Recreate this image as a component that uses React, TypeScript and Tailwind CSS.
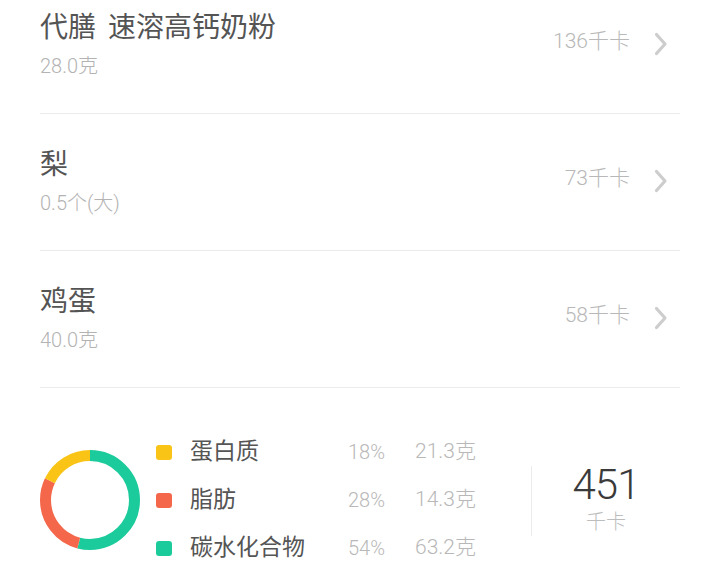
import React from "react";

const FONT = { fontFamily: '"Roboto", "Noto Sans CJK SC", sans-serif' };

const items = [
  { name: "代膳 速溶高钙奶粉", amount: "28.0克", kcal: "136" },
  { name: "梨", amount: "0.5个(大)", kcal: "73" },
  { name: "鸡蛋", amount: "40.0克", kcal: "58" },
];

const macros = [
  { name: "蛋白质", pct: "18%", g: "21.3克", color: "bg-[#f9c416]" },
  { name: "脂肪", pct: "28%", g: "14.3克", color: "bg-[#f4674b]" },
  { name: "碳水化合物", pct: "54%", g: "63.2克", color: "bg-[#1ccb9b]" },
];

function Chevron() {
  return (
    <svg width="14" height="24" viewBox="0 0 14 24" className="mt-[55px]">
      <polyline points="2.5,2.5 11,12 2.5,21.5" fill="none" stroke="#cdcdcd" strokeWidth="3.2" strokeLinecap="round" strokeLinejoin="round" />
    </svg>
  );
}

function Donut() {
  const r = 44.5;
  const C = 2 * Math.PI * r;
  const segs = [
    { c: "#1ccb9b", f: 0.54, o: 0 },
    { c: "#f4674b", f: 0.28, o: 0.54 },
    { c: "#f9c416", f: 0.18, o: 0.82 },
  ];
  return (
    <svg width="100" height="100" viewBox="0 0 100 100" className="shrink-0">
      <g transform="rotate(-90 50 50)">
        {segs.map((s, i) => (
          <circle
            key={i}
            cx="50"
            cy="50"
            r={r}
            fill="none"
            stroke={s.c}
            strokeWidth="11"
            strokeDasharray={`${s.f * C} ${C}`}
            strokeDashoffset={-s.o * C}
          />
        ))}
      </g>
    </svg>
  );
}

export default function App() {
  return (
    <div className="w-[720px] h-[576px] bg-white overflow-hidden px-10" style={FONT}>
      <div className="mt-[-23px]">
        {items.map((it) => (
          <div key={it.name} className="h-[137px] border-b border-[#ebebeb] flex">
            <div className="flex-1 pt-[33px]">
              <div className="text-[28px] leading-[36px] text-[#545454] whitespace-pre [word-spacing:5px]">{it.name}</div>
              <div className="mt-[2px] text-[20px] leading-[36px] text-[#b3b3b3] font-light">{it.amount}</div>
            </div>
            <div className="pt-[50px] text-[21px] leading-[28px] text-[#b8b8b8] font-light">
              {it.kcal}千卡
            </div>
            <div className="ml-[24px] mr-[12px]">
              <Chevron />
            </div>
          </div>
        ))}
      </div>
      <div className="flex items-start pt-[40px]">
        <div className="mt-[22px]">
          <Donut />
        </div>
        <div className="ml-4 w-[375px] flex flex-col">
          {macros.map((m) => (
            <div key={m.name} className="h-[48px] flex items-center">
              <div className={`w-4 h-[15px] rounded-[3px] ${m.color}`} />
              <div className="ml-[18px] w-[158px] text-[23px] text-[#555555]">{m.name}</div>
              <div className="w-[67px] text-[20px] text-[#b8b8b8] font-light">{m.pct}</div>
              <div className="text-[21px] text-[#b8b8b8] font-light">{m.g}</div>
            </div>
          ))}
        </div>
        <div className="w-px h-[70px] bg-[#ececec] mt-[38px]" />
        <div className="flex-1 flex flex-col items-center mt-[32px]">
          <div className="text-[42px] leading-[50px] text-[#3a3a3a] font-light tracking-[-1px]">451</div>
          <div className="text-[20px] leading-[28px] text-[#bdbdbd] font-light mt-[-2px]">千卡</div>
        </div>
      </div>
    </div>
  );
}
